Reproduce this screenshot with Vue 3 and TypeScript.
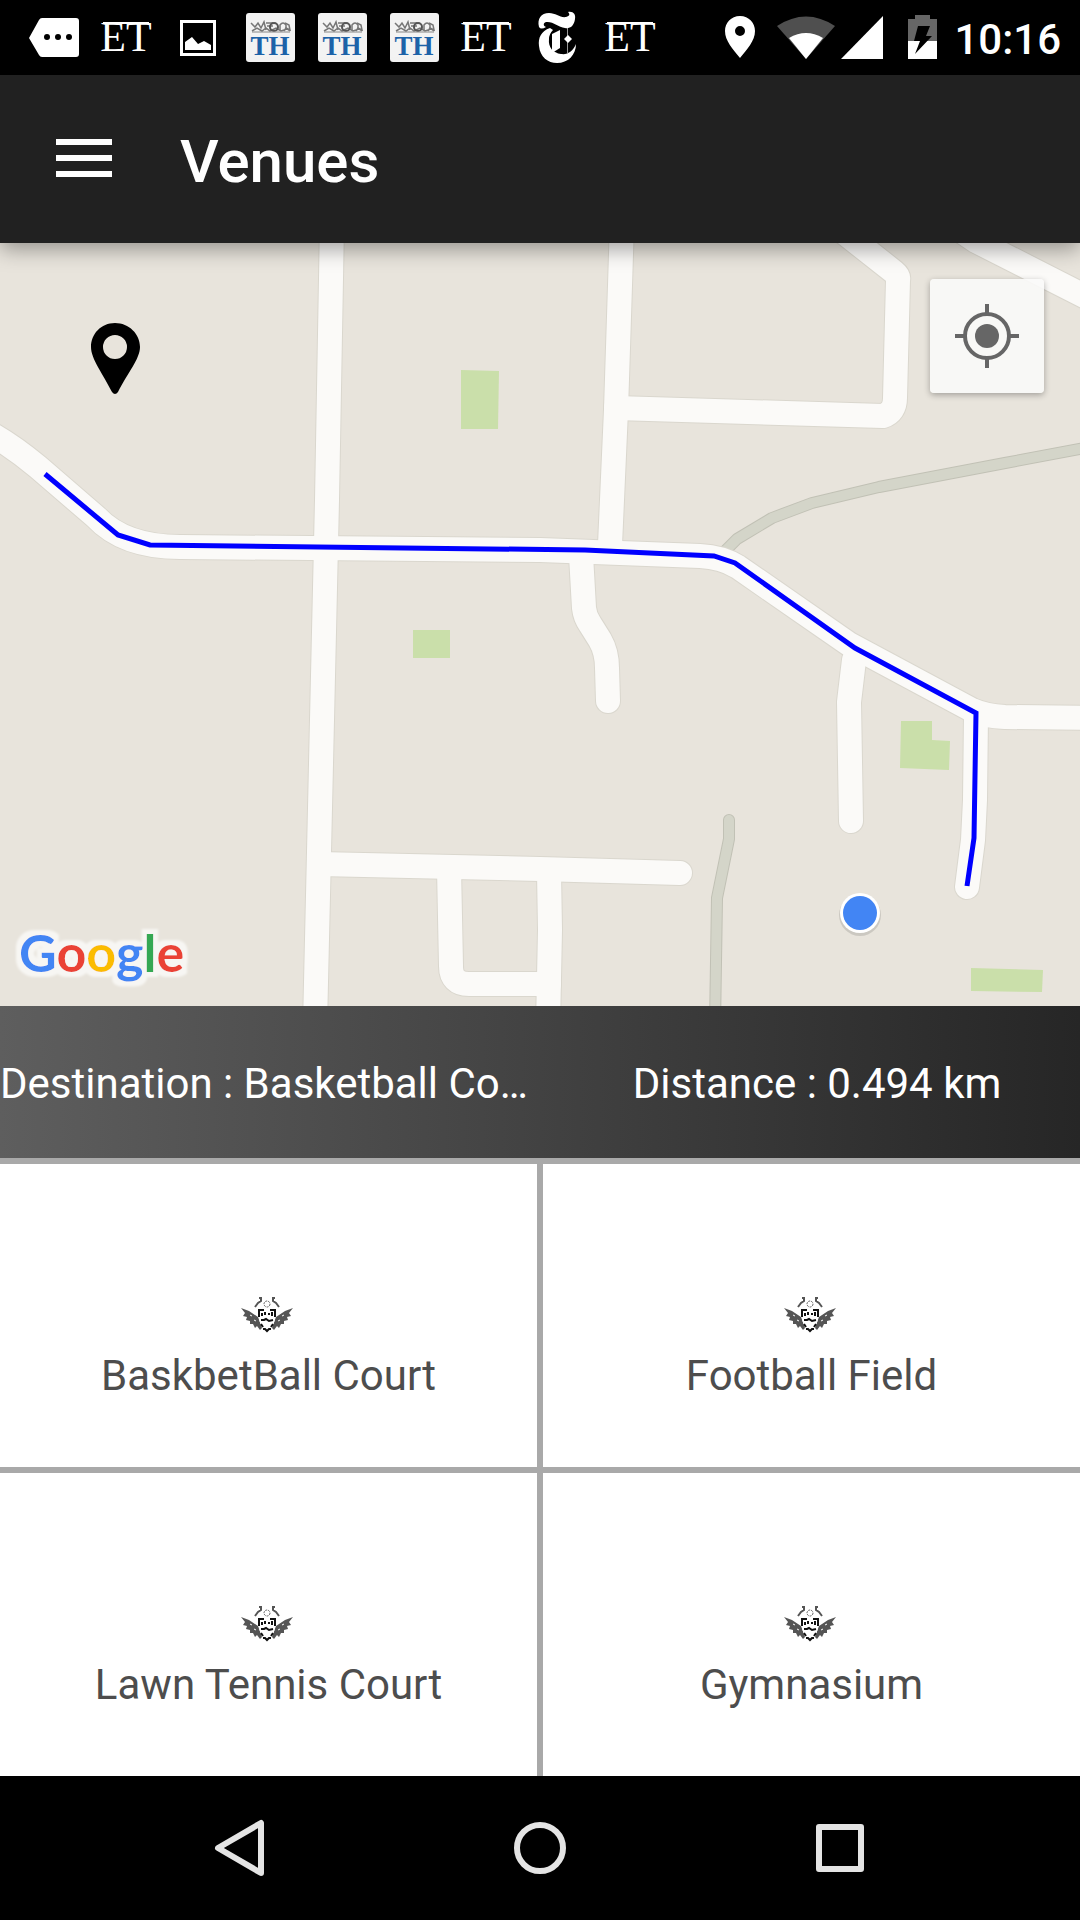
<script setup lang="ts">
type Notice = 'more' | 'et' | 'picture' | 'th' | 'nyt'

const notices: Notice[] = ['more', 'et', 'picture', 'th', 'th', 'th', 'et', 'nyt', 'et']
const venues: string[] = ['BaskbetBall Court', 'Football Field', 'Lawn Tennis Court', 'Gymnasium']

const roads: string[] = [
  'M332 223L327 500L319 852L315 1026',
  'M-20 428Q8 442 38 467L96 517Q124 547 180 547L540 550L700 556Q722 557 738 567L849 644L972 710Q985 716 1005 717L1100 718',
  'M622 223L616 410L610 545',
  'M616 408L883 416Q895 412 895 398L898 280Q899 276 894 272L832 223',
  'M948 222L976 241L1100 304',
  'M581 555L584 608Q585 617 590 624L600 640Q607 652 607 668L608 701',
  'M854 660L849 702L851 821',
  'M976 715L975 800L973 840L967 887',
  'M319 864L540 869L680 873',
  'M449 868L451 966Q451 984 469 984L549 984',
  'M549 872L550 930L548 1026',
]
const trails: string[] = [
  'M1100 445L1005 463L879 487L812 503L772 518L737 539L724 552',
  'M729 820L729 839L717 898L715 1026',
]
const parks: string[] = [
  '461,370 499,371 498,429 461,429',
  '413,630 450,630 450,658 413,658',
  '901,721 932,721 932,740 950,741 949,770 900,768',
  '971,968 1043,970 1042,992 971,991',
]
</script>

<template>
  <div class="screen">
    <div class="status">
      <div class="notices">
        <svg v-for="(n, i) in notices" :key="i" class="notice" viewBox="0 0 72 75" aria-hidden="true">
          <template v-if="n === 'more'">
            <path d="M24 18H58Q61 18 61 21V54Q61 57 58 57H24Q22 57 21 55L11 38L21 20Q22 18 24 18Z" fill="#fff" />
            <circle cx="29" cy="37" r="3" /><circle cx="40" cy="37" r="3" /><circle cx="51" cy="37" r="3" />
          </template>
          <template v-else-if="n === 'et'">
            <text class="serif" x="36" y="51" font-size="42" text-anchor="middle" fill="#fff">ET</text>
            <path d="M13 23H59" stroke="#fff" stroke-width="2" />
          </template>
          <template v-else-if="n === 'picture'">
            <rect x="19.500" y="21.500" width="33" height="33" fill="none" stroke="#fff" stroke-width="3" />
            <path d="M23 50V42L30 37L36 44L42 41L49 45V50Z" fill="#fff" />
          </template>
          <template v-else-if="n === 'th'">
            <rect x="12" y="13" width="49" height="49" rx="3" fill="#f3f3f3" />
            <g fill="none" stroke="#777" stroke-width="1.500">
              <path d="M17 23l4 4 3-4 3 5 3-6 2 8M18 31l5-3 5 3 4-3 4 3 6-3 5 3 6-2 3 2M51 23l4 2 1 5-4-2-2 3" />
              <path d="M46 30v-5q3-4 6 0v5M32 23h7M33 26h6" />
            </g>
            <circle cx="40" cy="27" r="4" fill="none" stroke="#555" stroke-width="2" />
            <path d="M18 32H56" stroke="#888" stroke-width="1" />
            <text class="serif" x="36" y="55" font-size="27" font-weight="700" text-anchor="middle" fill="#1c62a8">TH</text>
          </template>
          <template v-else>
            <g fill="#fff">
              <path d="M17 27C15 19 19 13 27 13C34 13 38 18 44 17C48 16 48 14 46 12C51 11 54 14 53 19C52 26 48 29 43 28C36 27 31 21 24 22C21 23 21 26 24 27Q19 30 17 27Z" />
              <path d="M28 28C19 31 16 38 17 46C18 57 26 63 35 63C46 63 54 55 54 44C51 51 46 55 39 54C31 53 26 47 27 39Q27 34 31 30Z" />
              <path d="M30 34L38 30V48L30 53Z" />
              <path d="M42 39L46 35L50 39L46 43Z" />
              <path d="M45 28H46V53H45Z" opacity=".6" />
            </g>
          </template>
        </svg>
      </div>
      <div class="system">
        <svg class="sys-icons" viewBox="0 0 216 75" aria-hidden="true">
          <path fill-rule="evenodd" d="M20 16C11 16 5 23 5 31C5 41 13 49 20 58C27 49 35 41 35 31C35 23 29 16 20 16ZM20 26A5 5 0 1 1 20 36A5 5 0 1 1 20 26Z" fill="#fff" />
          <path d="M57 26Q86 7 115 26L86 59Z" fill="#4f4f4f" />
          <path d="M69 38Q86 28 103 38L86 59Z" fill="#fff" />
          <path d="M163 16V59H121Z" fill="#fff" />
          <path d="M188 19H195V15H210V19H217V41H188Z" fill="#666" />
          <path d="M188 41H217V59H188Z" fill="#fff" />
          <path d="M198 26H210L206 36H212L195 54L200 41H194Z" fill="#000" />
        </svg>
        <time class="clock">10:16</time>
      </div>
    </div>

    <header class="appbar">
      <button class="menu" type="button" aria-label="Open menu">
        <span class="bar"></span><span class="bar"></span><span class="bar"></span>
      </button>
      <h1 class="title">Venues</h1>
    </header>

    <section class="map" aria-label="Route map">
      <svg class="canvas" viewBox="0 243 1080 763">
        <defs>
          <filter id="halo" x="-20%" y="-20%" width="140%" height="140%">
            <feMorphology in="SourceAlpha" operator="dilate" radius="5" result="grown" />
            <feGaussianBlur in="grown" stdDeviation="1" result="soft" />
            <feFlood flood-color="#f7f6f3" />
            <feComposite in2="soft" operator="in" result="edge" />
            <feMerge>
              <feMergeNode in="edge" />
              <feMergeNode in="SourceGraphic" />
            </feMerge>
          </filter>
        </defs>
        <rect y="243" width="1080" height="763" fill="#e8e4dc" />
        <polygon v-for="p in parks" :key="p" :points="p" fill="#cadfaa" />
        <g class="line">
          <path v-for="d in trails" :key="d" :d="d" stroke="#c1c1b5" stroke-width="12" />
          <path v-for="d in trails" :key="d + 'f'" :d="d" stroke="#d4d5c9" stroke-width="10" />
          <path v-for="d in roads" :key="d" :d="d" stroke="#dad7ce" stroke-width="26" />
          <path v-for="d in roads" :key="d + 'f'" :d="d" stroke="#fbfaf8" stroke-width="24" />
        </g>
        <path
          d="M45 474L118 535L150 545L585 550L714 556L735 563L855 648L976 713L974 838L967 886"
          fill="none" stroke="#00f" stroke-width="5"
        />
        <path
          fill-rule="evenodd"
          d="M115 323C101 323 91 334 91 347C91 359 103 374 112 392Q115 396 118 392C127 374 140 359 140 347C140 334 129 323 115 323ZM115 335A12 12 0 1 1 115 359A12 12 0 1 1 115 335Z"
        />
        <circle cx="860" cy="915" r="21" fill="#000" opacity=".12" />
        <circle cx="860" cy="913" r="20" fill="#fff" />
        <circle cx="860" cy="913" r="17" fill="#4285f4" />
        <text class="brand" x="19" y="972" filter="url(#halo)"><tspan fill="#4285f4">G</tspan><tspan fill="#ea4335">o</tspan><tspan fill="#fbbc05">o</tspan><tspan fill="#4285f4">g</tspan><tspan fill="#34a853">l</tspan><tspan fill="#ea4335">e</tspan></text>
      </svg>
      <button class="locate" type="button" aria-label="My location">
        <svg viewBox="0 0 66 66" width="66" height="66">
          <circle cx="33" cy="33" r="22" fill="none" stroke="#666" stroke-width="4" />
          <circle cx="33" cy="33" r="12" fill="#666" />
          <path d="M33 1V10M33 56V65M1 33H10M56 33H65" stroke="#666" stroke-width="4" />
        </svg>
      </button>
    </section>

    <section class="info">
      <p class="destination">Destination : Basketball Co…</p>
      <p class="distance">Distance : 0.494 km</p>
    </section>

    <main class="venues">
      <button v-for="name in venues" :key="name" class="venue" type="button">
        <svg class="crest" viewBox="2 0 52 38" aria-hidden="true">
          <path d="M0 12L8 15L17 21L21 32L19 34L16 30L14 32L12 28L9 28L9 25L5 24L6 21L2 20L4 17Z" fill="#555" />
          <path d="M52 12L44 15L35 21L31 32L33 34L36 30L38 32L40 28L43 28L43 25L47 24L46 21L50 20L48 17Z" fill="#555" />
          <path d="M9 19l2 1M13 24l2 1M43 19l-2 1M39 24l-2 1" stroke="#fff" stroke-width="1" />
          <path d="M18 14H34V21Q34 30 26 35Q18 30 18 21Z" fill="#fff" />
          <path d="M18 21V14H23M29 14H34V21M21 17v3M24 16v3M28 17v2M31 16v4M20 24h3l2-1 3 2 4-1M20 28l2 3M32 28l-2 3M22 33h2l2 2 2-2h2" fill="none" stroke="#111" stroke-width="2" />
          <path d="M18 2h2v3l-3 2-3 4M34 2h-2v3l3 2 3 4" fill="none" stroke="#555" stroke-width="2" />
          <circle cx="26" cy="8" r="3" fill="none" stroke="#666" stroke-width="1" stroke-dasharray="2 1" />
        </svg>
        <span class="name">{{ name }}</span>
      </button>
    </main>

    <nav class="navbar" aria-label="System navigation">
      <button type="button" aria-label="Back">
        <svg viewBox="0 0 60 60" width="60" height="60"><path d="M51 5V55L8 30Z" /></svg>
      </button>
      <button type="button" aria-label="Home">
        <svg viewBox="0 0 60 60" width="60" height="60"><circle cx="30" cy="30" r="23" /></svg>
      </button>
      <button type="button" aria-label="Recent apps">
        <svg viewBox="0 0 60 60" width="60" height="60"><rect x="9" y="9" width="42" height="42" /></svg>
      </button>
    </nav>
  </div>
</template>

<style>
body {
  margin: 0;
  background: #000;
}
</style>

<style scoped>
.screen {
  display: flex;
  flex-direction: column;
  min-height: 100vh;
  font-family: Roboto, "Noto Sans", sans-serif;
}
button {
  margin: 0;
  padding: 0;
  border: 0;
  background: none;
  font: inherit;
  color: inherit;
}
svg {
  display: block;
}
.status {
  display: flex;
  justify-content: space-between;
  height: 75px;
  padding: 0 19px 0 18px;
  background: #000;
  color: #fff;
}
.notices,
.system {
  display: flex;
  align-items: center;
}
.notice {
  width: 72px;
  height: 75px;
}
.serif {
  font-family: "Liberation Serif", serif;
}
.sys-icons {
  width: 216px;
  height: 75px;
  overflow: visible;
}
.clock {
  margin-left: 18px;
  padding-top: 3px;
  font-size: 42px;
  font-weight: 500;
}
.appbar {
  position: relative;
  z-index: 1;
  display: flex;
  align-items: center;
  gap: 68px;
  height: 168px;
  padding: 0 56px;
  background: #212121;
  color: #fff;
  box-shadow: 0 6px 20px rgba(0, 0, 0, 0.36);
}
.menu {
  display: flex;
  flex-direction: column;
  gap: 10px;
  width: 56px;
  padding-bottom: 2px;
}
.bar {
  height: 6px;
  background: #fff;
}
.title {
  margin: 0;
  padding-top: 4px;
  font-size: 60px;
  font-weight: 500;
}
.map {
  position: relative;
}
.canvas {
  width: 100%;
  height: auto;
}
.line {
  fill: none;
  stroke-linecap: round;
  stroke-linejoin: round;
}
.brand {
  font-family: Lato, sans-serif;
  font-size: 52px;
  font-weight: 700;
}
.locate {
  position: absolute;
  top: 36px;
  right: 36px;
  display: flex;
  align-items: center;
  justify-content: center;
  width: 114px;
  height: 114px;
  border-radius: 4px;
  background: rgba(250, 249, 248, 0.9);
  box-shadow: 0 2px 6px rgba(0, 0, 0, 0.3);
}
.info {
  display: grid;
  grid-template-columns: 1fr 1fr;
  align-items: center;
  height: 152px;
  background: linear-gradient(90deg, #5e5e5e, #262626);
  color: #fff;
  font-size: 42px;
}
.info p {
  margin: 0;
  padding-top: 2px;
  white-space: nowrap;
}
.info .distance {
  padding-left: 14px;
  text-align: center;
}
.venues {
  flex: 1;
  display: grid;
  grid-template-columns: 1fr 1fr;
  grid-auto-rows: 1fr;
  gap: 6px;
  padding-top: 6px;
  background: #a9a9a9;
}
.venue {
  display: flex;
  flex-direction: column;
  align-items: center;
  justify-content: center;
  gap: 17px;
  min-height: 180px;
  padding-top: 66px;
  background: #fff;
  color: #4d4d4d;
  font-size: 42px;
  line-height: 50px;
}
.crest {
  width: 52px;
  height: 38px;
  overflow: visible;
}
.navbar {
  display: grid;
  grid-template-columns: repeat(3, 1fr);
  height: 144px;
  padding: 0 90px;
  background: #000;
}
.navbar button {
  display: flex;
  align-items: center;
  justify-content: center;
}
.navbar svg {
  fill: none;
  stroke: #e4e4e4;
  stroke-width: 6px;
  stroke-linejoin: round;
}
</style>
